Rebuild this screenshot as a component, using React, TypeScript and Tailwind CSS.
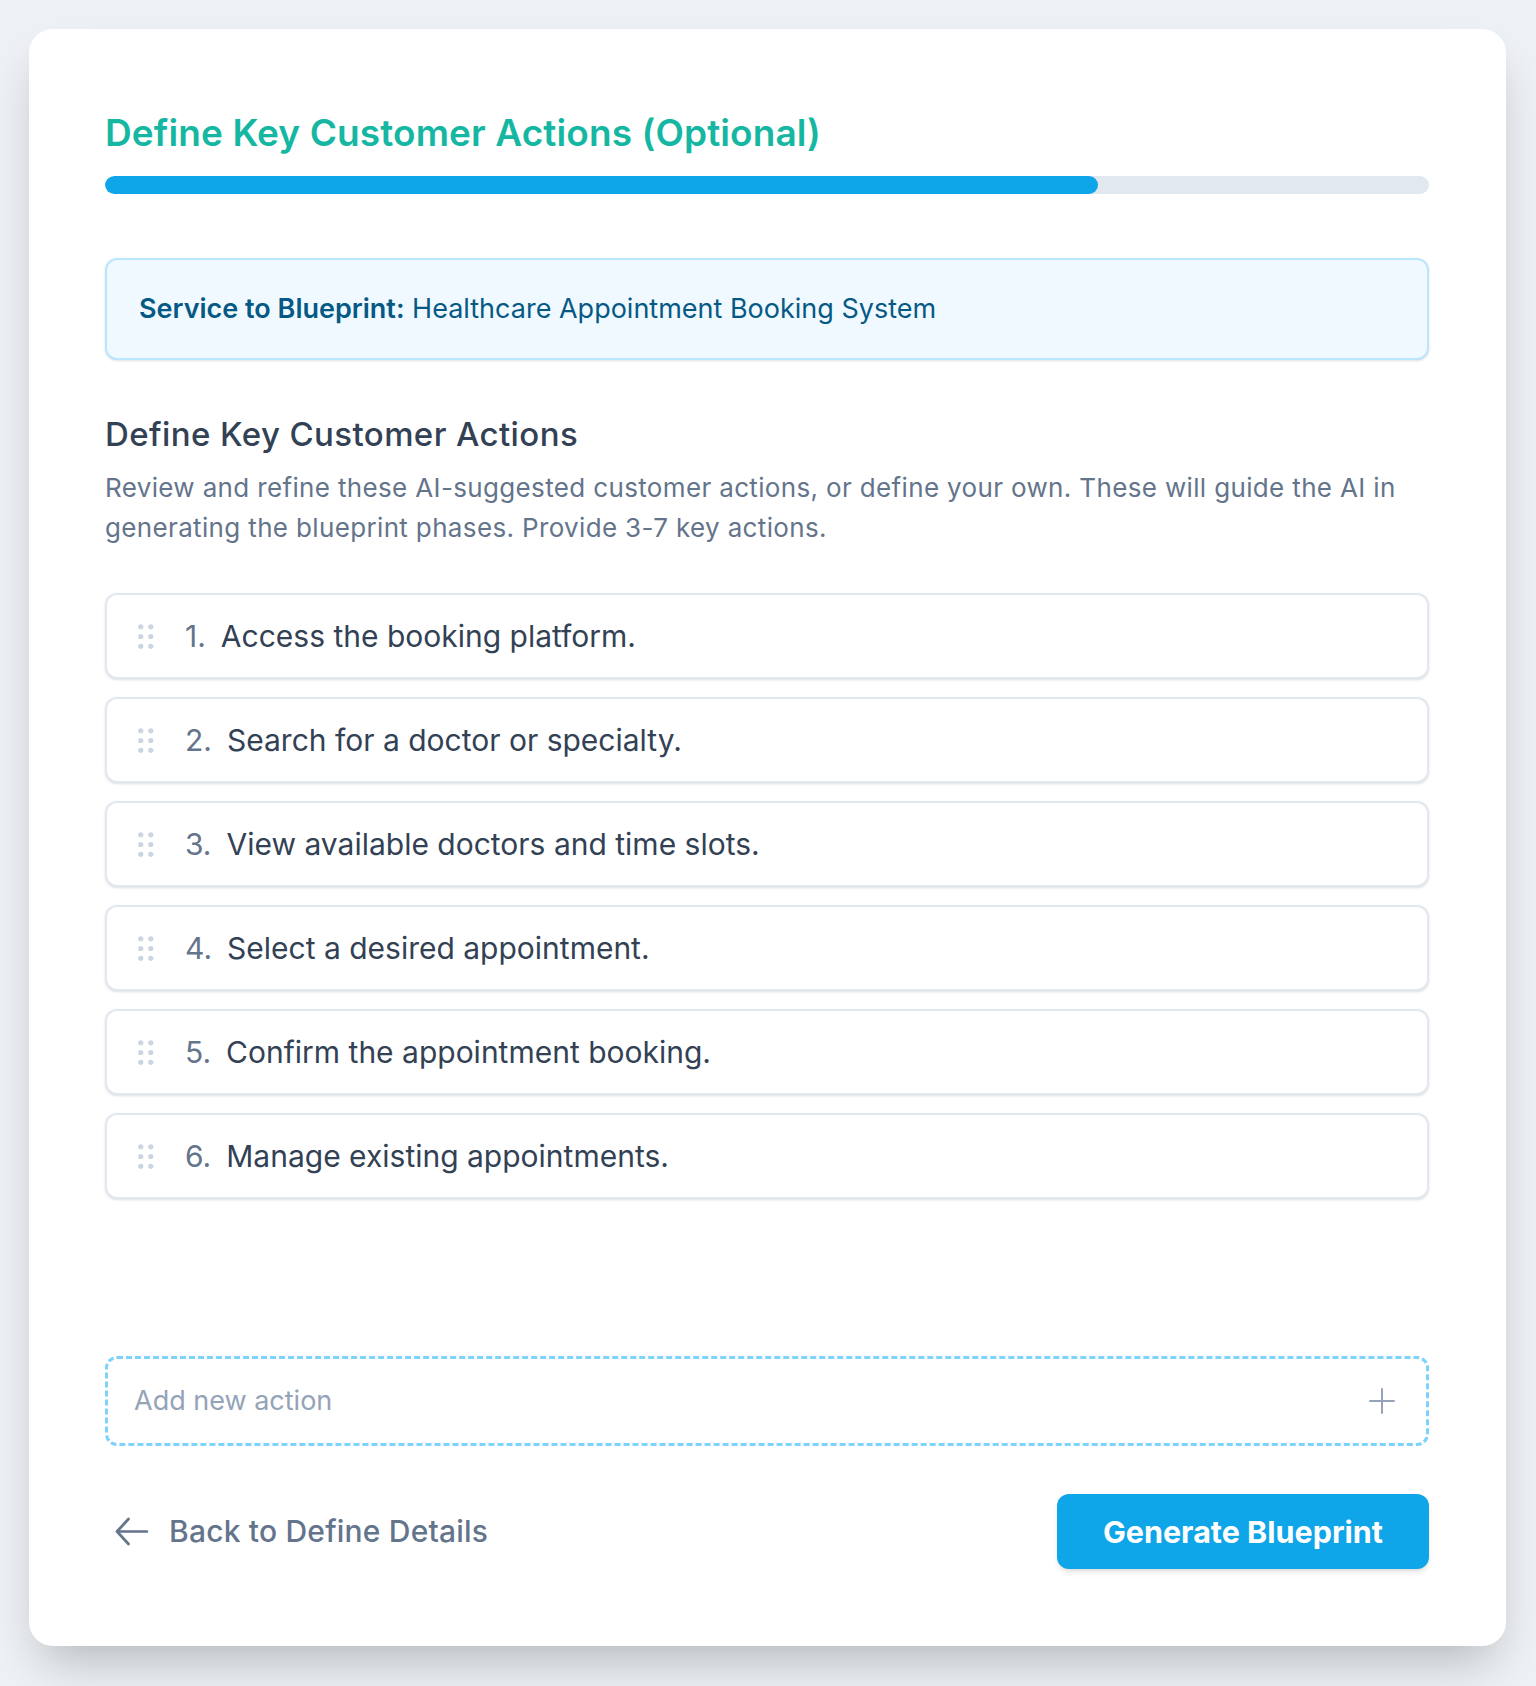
import React from "react";

const actions = [
  "Access the booking platform.",
  "Search for a doctor or specialty.",
  "View available doctors and time slots.",
  "Select a desired appointment.",
  "Confirm the appointment booking.",
  "Manage existing appointments.",
];

function Grip() {
  return (
    <svg width="16" height="25" viewBox="0 0 16 25" className="shrink-0">
      {[2.75, 12.5, 22.25].map((cy) => (
        <g key={cy}>
          <circle cx="2.75" cy={cy} r="2.6" fill="#cbd5e1" />
          <circle cx="12.75" cy={cy} r="2.6" fill="#cbd5e1" />
        </g>
      ))}
    </svg>
  );
}

export default function App() {
  return (
    <div className="min-h-screen bg-[#eef2f6] pl-[29px] pr-[30px] pt-[29px] pb-[39px] font-['Inter','Noto_Sans',sans-serif]">
      <div className="bg-white rounded-3xl shadow-2xl pl-[76px] pr-[77px] pt-[84px] pb-[77px]">
        <h1 className="text-[37px] leading-[40px] font-semibold text-[#16b7a2] tracking-[0.1px]">
          Define Key Customer Actions (Optional)
        </h1>
        <div className="mt-[23px] h-[18px] w-full rounded-full bg-[#e2e8f0] overflow-hidden">
          <div className="h-full w-[75%] rounded-full bg-[#0ea5e9]" />
        </div>

        <div className="mt-[64px] rounded-xl border-2 border-[#bae6fd] bg-[#f0f9ff] px-8 py-8 text-[27px] leading-[34px] text-[#075985] shadow-sm">
          <span className="font-semibold">Service to Blueprint:</span> Healthcare Appointment Booking System
        </div>

        <h2 className="mt-[56px] text-[33px] leading-[36px] font-medium text-[#334155] tracking-[0.4px]">
          Define Key Customer Actions
        </h2>
        <p className="mt-[16px] text-[26px] leading-[40px] text-[#64748b] tracking-[0.35px]">
          Review and refine these AI-suggested customer actions, or define your own. These will guide the AI in
          generating the blueprint phases. Provide 3-7 key actions.
        </p>

        <div className="mt-[45px] flex flex-col gap-[18px]">
          {actions.map((a, i) => (
            <div
              key={i}
              className="h-[86px] flex items-center rounded-xl border-2 border-[#e2e8f0] bg-white pl-[31px] pr-6 shadow-sm"
            >
              <Grip />
              <span className="ml-[31px] text-[30px] text-[#64748b]">{i + 1}.</span>
              <span className="ml-[15px] text-[30px] text-[#334155]">{a}</span>
            </div>
          ))}
        </div>

        <div className="mt-[157px] h-[90px] flex items-center justify-between rounded-xl border-[3px] border-dashed border-[#7dd3fc] pl-[26px] pr-[31px]">
          <span className="text-[27px] text-[#94a3b8]">Add new action</span>
          <svg width="26" height="26" viewBox="0 0 26 26" fill="none" stroke="#94a3b8" strokeWidth="2" strokeLinecap="round">
            <path d="M13 1v24M1 13h24" />
          </svg>
        </div>

        <div className="mt-[48px] flex items-center justify-between">
          <button className="flex items-center gap-[20px] pl-[10px] text-[30px] font-medium text-[#64748b] tracking-[0.2px]">
            <svg width="34" height="29" viewBox="0 0 34 29" fill="none" stroke="#64748b" strokeWidth="2.7" strokeLinecap="round" strokeLinejoin="round">
              <path d="M13.5 2 L2 14.5 L13.5 27 M2 14.5 H32" />
            </svg>
            Back to Define Details
          </button>
          <button className="h-[75px] px-[46px] rounded-xl bg-[#0ea5e9] text-white text-[30.5px] font-bold shadow-md">
            Generate Blueprint
          </button>
        </div>
      </div>
    </div>
  );
}
